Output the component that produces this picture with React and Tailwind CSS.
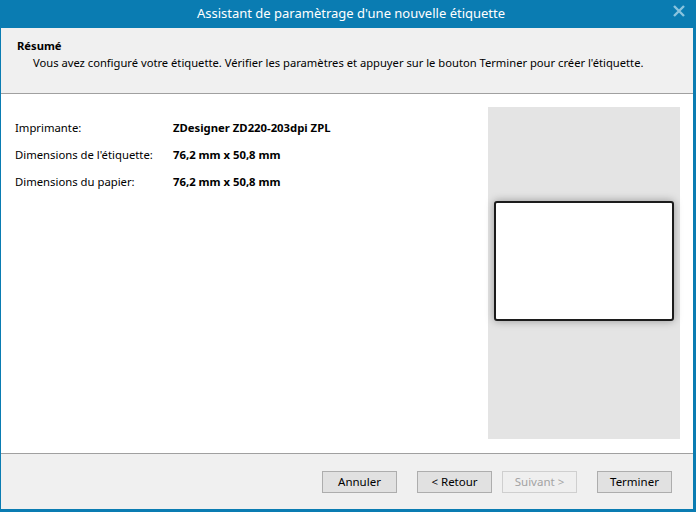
import React from 'react';

const rows = [
  { label: 'Imprimante:', value: 'ZDesigner ZD220-203dpi ZPL' },
  { label: "Dimensions de l'étiquette:", value: '76,2 mm x 50,8 mm' },
  { label: 'Dimensions du papier:', value: '76,2 mm x 50,8 mm' },
];

function Btn({ children, disabled }) {
  return (
    <button
      disabled={disabled}
      className={
        disabled
          ? 'w-[75px] h-[22px] border border-[#cfcfcf] bg-[#efefef] text-[#a3a3a3] text-[11.5px] leading-none'
          : 'w-[75px] h-[22px] border border-[#adadad] bg-[#e1e1e1] text-black text-[11.5px] leading-none'
      }
    >
      {children}
    </button>
  );
}

export default function App() {
  return (
    <div
      className="w-[696px] h-[512px] bg-[#0a7cb2] flex flex-col pl-px pr-[3px] pb-[3px] overflow-hidden"
      style={{ fontFamily: '"Noto Sans", "Open Sans", sans-serif' }}
    >
      {/* Title bar */}
      <div className="h-[28px] flex items-center justify-center relative text-white text-[13px]">
        <span className="ml-[8px]">Assistant de paramètrage d'une nouvelle étiquette</span>
        <span className="absolute right-[7px] top-[4px] text-[#8ac4de]">
          <svg width="14" height="14" viewBox="0 0 14 14">
            <path d="M2 2 L12 12 M12 2 L2 12" stroke="currentColor" strokeWidth="2.4" />
          </svg>
        </span>
      </div>

      {/* Header */}
      <div className="h-[66px] bg-[#f0f0f0] border-b border-[#a0a0a0] pl-[16px] pt-[10px] text-[11.2px] text-black">
        <div className="font-bold leading-[16px]">Résumé</div>
        <div className="pl-[16px] leading-[16px] mt-px">
          Vous avez configuré votre étiquette. Vérifier les paramètres et appuyer sur le bouton Terminer pour créer l'étiquette.
        </div>
      </div>

      {/* Content */}
      <div className="flex-1 bg-white border-b border-[#a0a0a0] flex">
        <div className="flex-1 pl-[14px] pt-[21px] text-[11.3px] text-black">
          {rows.map((r) => (
            <div key={r.label} className="flex h-[27px] items-center">
              <div className="w-[158px]">{r.label}</div>
              <div className="font-bold">{r.value}</div>
            </div>
          ))}
        </div>
        <div className="w-[192px] mt-[13px] mb-[14px] mr-[13px] bg-[#e4e4e4] flex items-center justify-center">
          <div className="w-[180px] h-[120px] -mt-[24px] bg-white border-2 border-[#1c1c1c] rounded-[3px] shadow-[0_0_8px_rgba(0,0,0,0.35)]" />
        </div>
      </div>

      {/* Footer */}
      <div className="h-[55px] bg-[#f0f0f0] flex items-start pt-[17px] pl-[321px]">
        <Btn>Annuler</Btn>
        <div className="w-[20px]" />
        <Btn>&lt; Retour</Btn>
        <div className="w-[10px]" />
        <Btn disabled>Suivant &gt;</Btn>
        <div className="w-[20px]" />
        <Btn>Terminer</Btn>
      </div>
    </div>
  );
}
